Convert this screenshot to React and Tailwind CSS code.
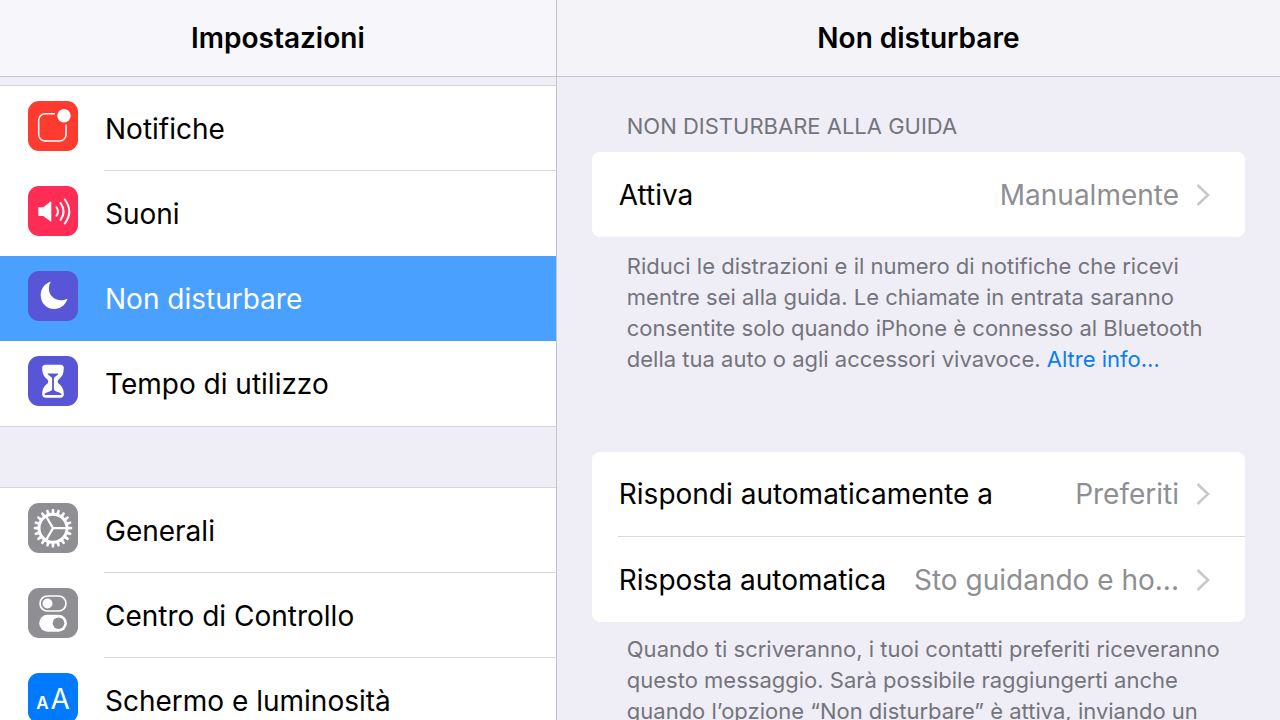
import clsx from 'clsx';

const GEAR_TEETH = Array.from({ length: 20 }, (_, i) => i * 18);

function NotificationsIcon() {
  return (
    <svg viewBox="0 0 50 50" className="size-full" fill="none" aria-hidden="true">
      <path
        d="M27 12.700H17.200a6.500 6.500 0 0 0-6.500 6.500v14.300a6.500 6.500 0 0 0 6.500 6.500h14.300a6.500 6.500 0 0 0 6.500-6.500V23.500"
        stroke="#fff"
        strokeWidth="1.500"
      />
      <circle cx="36" cy="14.800" r="6.700" fill="#fff" />
    </svg>
  );
}

function SoundsIcon() {
  return (
    <svg viewBox="0 0 50 50" className="size-full" fill="none" aria-hidden="true">
      <path d="M10.300 21.300h5L22.300 15.800q1-.7 1 .5v18.400q0 1.200-1 .5L15.300 30h-5z" fill="#fff" />
      <g stroke="#fff" strokeWidth="2" strokeLinecap="round">
        <path d="M28.500 21.200q3 4.300 0 8.600" />
        <path d="M32.500 17q6.200 8.500 0 17" />
        <path d="M36.800 13.500q9 12 0 24" />
      </g>
    </svg>
  );
}

function MoonIcon() {
  return (
    <svg viewBox="0 0 50 50" className="size-full" aria-hidden="true">
      <path d="M22 10.800C15.500 13.500 12.700 19 12.700 24.300c0 7.800 5.900 13.700 13.500 13.700 6.200 0 11-3.700 13.100-9.400.2-.6-.2-.8-.7-.5-1.700.8-3.600 1.200-5.400 1.200-7.200 0-12.300-5-12.300-11.700 0-2.200.6-4.300 1.600-6 .4-.7.200-1-.5-.8z" fill="#fff" />
    </svg>
  );
}

function HourglassIcon() {
  return (
    <svg viewBox="0 0 50 50" className="size-full" aria-hidden="true">
      <path
        d="M17.500 8.700h15c2 0 3.300 1.200 3.300 3 0 6.300-2 9-4.700 11.200-1.900 1.500-1.900 3.700 0 5.200 2.700 2.200 4.700 5 4.700 10.500 0 2-1.300 3.100-3.300 3.100h-15c-2 0-3.300-1.100-3.300-3.100 0-5.500 2-8.300 4.700-10.500 1.900-1.500 1.900-3.700 0-5.200-2.700-2.200-4.700-4.900-4.700-11.200 0-1.800 1.300-3 3.300-3z"
        fill="#fff"
      />
      <path
        d="M20.200 17.500h9.600q1 0 .4.800c-1.200 1.500-3 2-3.900 3.200-.4.600-.4 1.200-.4 2v9.800c0 2.200 6.300 2.800 7.500 4.700q.5 1-.6 1H17.200q-1.100 0-.6-1c1.200-1.900 7.500-2.500 7.500-4.700v-9.800c0-.8 0-1.400-.4-2-.9-1.200-2.700-1.700-3.900-3.200q-.6-.8.400-.8z"
        fill="#5856d6"
      />
    </svg>
  );
}

function GearIcon() {
  return (
    <svg viewBox="0 0 50 50" className="size-full" fill="none" stroke="#fff" aria-hidden="true">
      <circle cx="25" cy="25.200" r="14" strokeWidth="3" />
      <path d="M25 25.200h13.500M25 25.200l-6.800-11.700M25 25.200l-6.800 11.700" strokeWidth="2.300" />
      {GEAR_TEETH.map((angle) => (
        <path key={angle} d="M39.500 23.600l4.700.5v2.200l-4.700.5z" fill="#fff" stroke="none" transform={`rotate(${angle} 25 25.200)`} />
      ))}
    </svg>
  );
}

function ControlCenterIcon() {
  return (
    <svg viewBox="0 0 50 50" className="size-full" aria-hidden="true">
      <rect x="12" y="8" width="26" height="15" rx="7.500" fill="none" stroke="#fff" strokeWidth="1.700" />
      <circle cx="19.500" cy="15.500" r="5" fill="#fff" />
      <rect x="11.200" y="26.800" width="27.700" height="16.900" rx="8.450" fill="#fff" />
      <circle cx="30.500" cy="35.200" r="5.800" fill="#8e8e93" />
    </svg>
  );
}

function DisplayIcon() {
  return (
    <span className="flex size-full items-baseline justify-center gap-0.5 pt-2.5 leading-8 text-white" aria-hidden="true">
      <span className="text-[17px] font-semibold">A</span>
      <span className="text-[28px]">A</span>
    </span>
  );
}

function Chevron() {
  return (
    <svg viewBox="0 0 14 24" className="ml-[17px] h-6 w-3.5 shrink-0" fill="none" aria-hidden="true">
      <path d="M1.500 2l10.500 10L1.500 22" stroke="#c7c7cc" strokeWidth="2.600" />
    </svg>
  );
}

const sidebarGroups = [
  [
    { label: 'Notifiche', color: 'bg-[#ff3b30]', Icon: NotificationsIcon },
    { label: 'Suoni', color: 'bg-[#ff2d55]', Icon: SoundsIcon },
    { label: 'Non disturbare', color: 'bg-[#5856d6]', Icon: MoonIcon, selected: true },
    { label: 'Tempo di utilizzo', color: 'bg-[#5856d6]', Icon: HourglassIcon },
  ],
  [
    { label: 'Generali', color: 'bg-[#8e8e93]', Icon: GearIcon },
    { label: 'Centro di Controllo', color: 'bg-[#8e8e93]', Icon: ControlCenterIcon },
    { label: 'Schermo e luminosità', color: 'bg-[#007aff]', Icon: DisplayIcon },
  ],
];

function SidebarRow({ label, color, Icon, selected, divider }) {
  return (
    <button
      type="button"
      aria-current={selected ? 'page' : undefined}
      className={clsx(
        'flex h-[85px] w-full items-stretch pl-7 text-left text-[28px]',
        selected ? 'bg-[#4aa0ff] text-white' : 'text-black'
      )}
    >
      <span className={clsx('mt-[15px] size-[50px] shrink-0 overflow-hidden rounded-[11px]', color)}>
        <Icon />
      </span>
      <span className={clsx('ml-[26px] flex grow items-center border-b pt-px pl-px', divider ? 'border-[#d9d9dc]' : 'border-transparent')}>
        {label}
      </span>
    </button>
  );
}

function SettingRow({ label, value, divider }) {
  return (
    <button type="button" className="flex h-[85px] w-full pl-[26px] text-left text-[28px]">
      <span className={clsx('flex h-full grow items-center justify-between pr-[35px] pl-px', divider && 'border-b border-[#d9d9dc]')}>
        <span className="whitespace-nowrap text-black">{label}</span>
        <span className="flex items-center whitespace-nowrap text-[#8e8e93]">
          {value}
          <Chevron />
        </span>
      </span>
    </button>
  );
}

export default function App() {
  return (
    <div className="flex h-screen overflow-hidden bg-[#efeef6] font-['Inter','Liberation_Sans',sans-serif]">
      <aside className="flex w-[43.5%] shrink-0 flex-col border-r border-[#c4c4c8]">
        <header className="flex h-[77px] shrink-0 items-center justify-center border-b border-[#c6c6ca] bg-[#f6f6fb]">
          <h1 className="text-[28px] font-semibold text-black">Impostazioni</h1>
        </header>
        <nav className="flex min-h-0 grow flex-col gap-[60px] overflow-hidden pt-2">
          {sidebarGroups.map((rows, i) => (
            <div key={i} className="shrink-0 border-y border-[#d5d5da] bg-white">
              {rows.map((row, j) => (
                <SidebarRow key={row.label} {...row} divider={j < rows.length - 1 && !row.selected && !rows[j + 1].selected} />
              ))}
            </div>
          ))}
        </nav>
      </aside>

      <main className="flex min-w-0 grow flex-col">
        <header className="flex h-[77px] shrink-0 items-center justify-center border-b border-[#c6c6ca] bg-[#f4f4f8]">
          <h2 className="text-[28px] font-semibold text-black">Non disturbare</h2>
        </header>
        <div className="min-h-0 grow overflow-hidden px-[35px] pt-[34px]">
          <section>
            <h3 className="pl-[35px] text-[22px] leading-[31px] text-[#74747c]">NON DISTURBARE ALLA GUIDA</h3>
            <div className="mt-2.5 overflow-hidden rounded-lg bg-white">
              <SettingRow label="Attiva" value="Manualmente" />
            </div>
            <p className="pt-3.5 pl-[35px] text-[22px] leading-[31px] text-[#74747c]">
              Riduci le distrazioni e il numero di notifiche che ricevi mentre sei alla guida. Le chiamate in entrata saranno
              consentite solo quando iPhone è connesso al Bluetooth della tua auto o agli accessori vivavoce.{' '}
              <a href="#altre-info" className="text-[#0a7df0]">Altre info…</a>
            </p>
          </section>

          <section className="mt-[77px]">
            <div className="overflow-hidden rounded-lg bg-white">
              <SettingRow label="Rispondi automaticamente a" value="Preferiti" divider />
              <SettingRow label="Risposta automatica" value="Sto guidando e ho..." />
            </div>
            <p className="pt-3 pl-[35px] text-[22px] leading-[31px] text-[#74747c]">
              Quando ti scriveranno, i tuoi contatti preferiti riceveranno questo messaggio. Sarà possibile raggiungerti anche
              quando l’opzione “Non disturbare” è attiva, inviando un
            </p>
          </section>
        </div>
      </main>
    </div>
  );
}
